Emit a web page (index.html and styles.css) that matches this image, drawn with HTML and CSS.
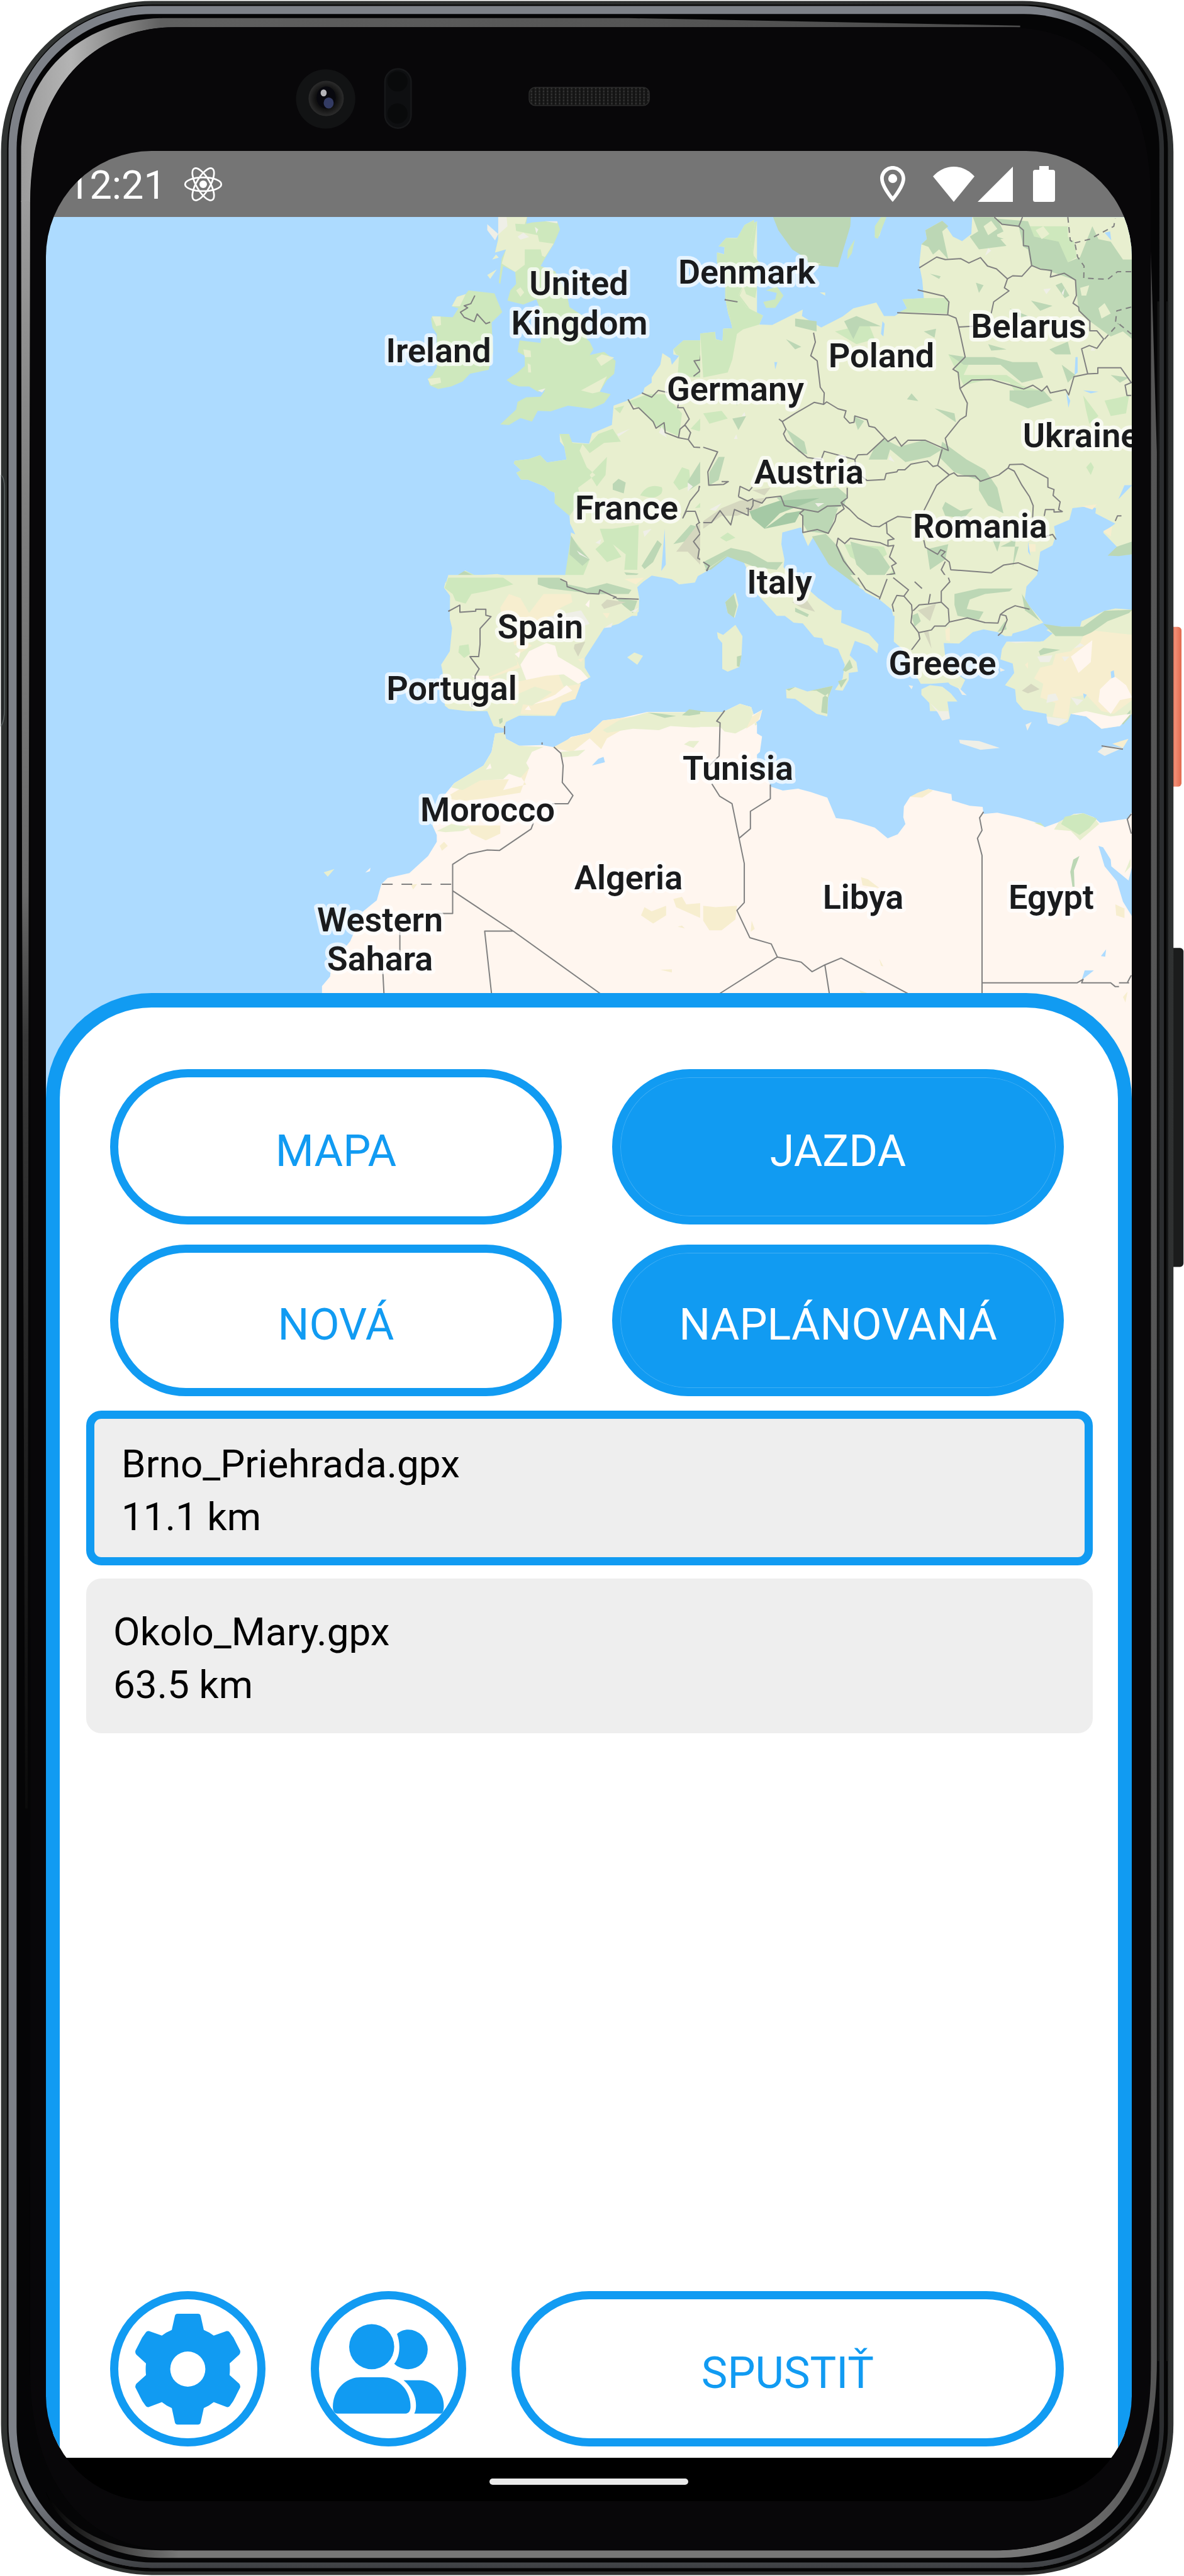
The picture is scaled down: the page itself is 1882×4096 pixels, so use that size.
FILE: index.html
```html
<!DOCTYPE html>
<html lang="sk">
<head>
<meta charset="utf-8">
<meta name="viewport" content="width=device-width, initial-scale=1">
<title>Jazda</title>
<link rel="stylesheet" href="styles.css">
</head>
<body>
<div class="device">
  <svg class="device-frame" viewBox="0 0 2356 5128" preserveAspectRatio="none" aria-hidden="true">
    <defs>
      <linearGradient id="rim" x1="0" x2="1" y1="0" y2="0">
        <stop offset="0" stop-color="#7d8188"/><stop offset=".9" stop-color="#7d8188"/><stop offset=".985" stop-color="#26282a"/><stop offset="1" stop-color="#2c2e30"/>
      </linearGradient>
      <linearGradient id="rimShade" x1="0" x2="0" y1="0" y2="1">
        <stop offset="0" stop-color="#000" stop-opacity="0"/><stop offset=".97" stop-color="#000" stop-opacity="0"/><stop offset="1" stop-color="#000" stop-opacity=".5"/>
      </linearGradient>
      <linearGradient id="edge" x1="0" x2="1" y1="0" y2="0">
        <stop offset="0" stop-color="#303332"/><stop offset=".985" stop-color="#2b2c2c"/><stop offset="1" stop-color="#303232"/>
      </linearGradient>
      <linearGradient id="topGlow" gradientUnits="userSpaceOnUse" x1="42" x2="2030" y1="0" y2="0">
        <stop offset="0" stop-color="#9c9c9c"/><stop offset=".05" stop-color="#b4b4b4"/><stop offset=".14" stop-color="#606060"/><stop offset="1" stop-color="#4c4c4c"/>
      </linearGradient>
      <linearGradient id="sideGlow" gradientUnits="userSpaceOnUse" x1="0" x2="0" y1="400" y2="3600">
        <stop offset="0" stop-color="#9c9c9c"/><stop offset=".2" stop-color="#7e7e7e"/><stop offset=".43" stop-color="#6a6a6a"/><stop offset=".52" stop-color="#383838"/><stop offset="1" stop-color="#0b0b0b"/>
      </linearGradient>
      <linearGradient id="bottomGlow" x1="0" x2="1" y1="0" y2="0">
        <stop offset="0" stop-color="#000"/><stop offset=".12" stop-color="#777"/><stop offset=".9" stop-color="#777"/><stop offset="1" stop-color="#555"/>
      </linearGradient>
      <linearGradient id="power" x1="0" x2="1" y1="0" y2="0">
        <stop offset="0" stop-color="#d9573d"/><stop offset=".5" stop-color="#f08d74"/><stop offset="1" stop-color="#e26a4e"/>
      </linearGradient>
      <radialGradient id="lens" cx=".5" cy=".5" r=".5">
        <stop offset="0" stop-color="#08080c"/><stop offset=".6" stop-color="#111"/><stop offset="1" stop-color="#2c2c2c"/>
      </radialGradient>
      <pattern id="mesh" width="8" height="6" patternUnits="userSpaceOnUse">
        <rect width="8" height="6" fill="#141414"/><rect width="3" height="4" fill="#343434"/>
      </pattern>
    </defs>
    <rect x="2326" y="1248" width="25" height="318" rx="7" fill="url(#power)"/>
    <rect x="2326" y="1887" width="29" height="635" rx="7" fill="#1b1c1c"/>
    <rect x="2" y="2" width="2333" height="5124" rx="300" fill="url(#edge)"/>
    <path d="M2 946Q9 950 9 975V1410Q9 1435 2 1446" fill="#26292a" stroke="#596060" stroke-width="2"/>
    <rect x="14" y="9" width="2310" height="5110" rx="290" fill="#050505"/>
    <rect x="17" y="12" width="2299" height="5100" rx="284" fill="url(#rim)"/>
    <rect x="17" y="12" width="2299" height="5100" rx="284" fill="url(#rimShade)"/>
    <rect x="33" y="28" width="2274" height="5073" rx="270" fill="#050506"/>
    <path d="M42 402V306C42 150 160 36 330 36H1250L2030 51V54H350C180 54 60 180 60 402Z" fill="url(#topGlow)"/>
    <path d="M42 400H60L57 1800L55 3600H50L44 1800Z" fill="url(#sideGlow)"/>
    <path d="M2290 500L2302 900V4700C2302 4950 2200 5092 1980 5092H320C220 5092 120 5040 90 4960C140 5040 220 5077 320 5077H1980C2190 5077 2290 4930 2290 4700Z" fill="url(#bottomGlow)"/>
    <path d="M2303 600H2307V4700H2303ZM2321 600H2324V4700H2321Z" fill="#151616"/>
    <path d="M61 400C61 180 180 54 350 54H2000C2190 54 2290 180 2290 400V4720C2290 4930 2190 5077 1980 5077H350C160 5077 60 4930 60 4720Z" fill="#080709"/>
    <circle cx="648" cy="197" r="59" fill="#121314"/>
    <circle cx="649" cy="196" r="35" fill="url(#lens)"/>
    <ellipse cx="649" cy="194" rx="19" ry="22" fill="#08080e"/>
    <ellipse cx="654" cy="205" rx="10" ry="11" fill="#333b63"/>
    <ellipse cx="644" cy="185" rx="6" ry="7" fill="#b5b5b9"/>
    <rect x="766" y="137" width="52" height="118" rx="26" fill="#0e0f11" stroke="#17181a" stroke-width="3"/>
    <circle cx="791" cy="162" r="20" fill="#090a0b"/>
    <circle cx="791" cy="226" r="20" fill="#090a0b"/>
    <rect x="1053" y="174" width="239" height="36" rx="12" fill="url(#mesh)" stroke="#2b2b2b" stroke-width="2"/>
  </svg>

  <main class="screen">
    <header class="status-bar">
      <span class="clock">12:21</span>
      <svg class="react-icon" viewBox="-38 -35 76 70" aria-hidden="true">
        <g fill="none" stroke="#fff" stroke-width="3.4">
          <ellipse rx="36" ry="13.6"/><ellipse rx="36" ry="13.6" transform="rotate(60)"/><ellipse rx="36" ry="13.6" transform="rotate(120)"/>
        </g>
        <circle r="7.5" fill="#fff"/>
      </svg>
      <span class="status-icons">
        <svg class="pin-icon" viewBox="5 2 14 20" aria-hidden="true"><path fill="#fff" d="M12 2C8.100 2 5 5.100 5 9c0 5.200 7 13 7 13s7-7.800 7-13c0-3.900-3.100-7-7-7zM7 9c0-2.800 2.200-5 5-5s5 2.200 5 5c0 2.900-2.900 7.200-5 9.900C9.900 16.200 7 11.900 7 9z"/><circle cx="12" cy="9" r="2.500" fill="#fff"/></svg>
        <svg class="wifi-icon" viewBox="0 0 66 56" aria-hidden="true"><path fill="#fff" d="M0 15.500C9 5.500 21 0 33 0S57 5.500 66 15.500L33 56Z"/></svg>
        <svg class="signal-icon" viewBox="0 0 56 56" aria-hidden="true"><path fill="#fff" d="M0 56H56V0Z"/></svg>
        <svg class="battery-icon" viewBox="0 0 35 57" aria-hidden="true"><path fill="#fff" d="M10 6V0H25V6H31.500Q35 6 35 9.500V53.500Q35 57 31.500 57H3.500Q0 57 0 53.500V9.500Q0 6 3.500 6Z"/></svg>
      </span>
    </header>

    <svg class="map" viewBox="0 0 1726 1406" role="img" aria-label="Mapa">
      <rect width="1726" height="1406" fill="#addbff"/>

      <!-- British Isles and western Europe -->
      <g class="tile" transform="translate(405.8 -9.6) scale(.4585 .4075)">
        <path class="forest" d="M440 655L455 640 470 610 470 480 455 455 450 420 455 410 525 415 545 380 522 372 540 335 570 325 580 310 670 322 680 350 697 395 660 435 665 550 650 620 585 635 560 665 520 685 475 695 445 680Z"/>
        <path class="land" d="M522 372L540 335 570 325 550 372ZM453 412L483 412 485 445 468 450ZM438 655L482 650 485 670 450 680Z"/>
        <path class="forest" d="M683 24H783L780 50 800 45 850 40 888 42 897 72 875 130 845 185 830 215 880 235 920 320 930 375 985 415 990 500 1000 510 1013 540 1000 562 1050 550 1090 585 1085 635 1060 660 1035 705 1073 715 1050 750 1005 772 925 760 865 782 820 780 800 822 760 808 720 835 690 833 745 775 750 745 780 727 830 725 845 700 820 705 790 685 755 685 730 675 712 660 750 630 775 605 775 565 750 550 757 505 830 515 835 400 815 345 770 365 715 350 725 310 745 285 742 238 700 215 690 285 685 280 695 185 710 150 672 162 683 110Z"/>
        <path class="land" d="M683 24H783L775 52 742 50 745 78 820 95 825 120 875 128 845 180 835 175 830 150 775 150 775 210 742 238 695 205 710 150 672 162 683 110ZM745 310L760 298 773 318 760 335ZM770 540L795 545 797 570 775 570ZM785 595L795 600 797 630 787 630ZM1022 575L1042 560 1085 572 1040 605ZM970 700L1060 645 1035 705 1010 712ZM645 250L678 228 655 265ZM662 190L675 170 685 182Z"/>
        <path class="pale" d="M683 24H712L715 60 683 92ZM645 52L683 90 672 115 645 75ZM750 100L770 85 790 102 760 112ZM810 62L822 72 815 88Z"/>
        <path class="land" d="M1580 40L1535 70 1515 105 1480 105 1450 138 1475 140 1470 170 1445 162 1443 200 1470 280 1470 340 1480 400 1497 458 1465 460 1463 508 1437 500 1435 472 1390 482 1383 505 1325 505 1290 540 1290 560 1310 565 1285 600 1280 575 1252 555 1245 600 1215 650 1215 670 1190 690 1185 710 1135 738 1083 760 1077 835 1008 868 998 908 935 902 928 870 896 870 897 900 912 920 920 970 852 982 828 953 790 968 740 975 737 985 762 1012 746 1022 762 1048 785 1048 845 1075 862 1092 878 1095 880 1138 930 1187 932 1220 950 1262 935 1255 930 1360 915 1428 880 1440 815 1428 770 1438 680 1417 600 1422 568 1403 550 1425 500 1448 495 1470 516 1500 516 1580 1165 1580 1170 1510 1163 1465 1215 1423 1285 1437 1310 1457 1365 1450 1375 1425 1415 1400 1475 1347 1530 1365 1580 1390Z"/>
        <path class="forest" d="M1580 40L1535 70 1515 105 1480 108 1455 135 1475 145 1470 170 1445 165 1443 200 1470 280 1470 340 1480 400 1497 458 1465 460 1463 508 1437 500 1435 472 1390 482 1383 505 1325 505 1290 540 1300 560 1310 565 1305 640 1360 650 1480 645 1500 580 1535 560 1530 500 1580 540 1580 420 1520 330 1560 230ZM896 870L928 870 940 905 998 910 1030 870 1080 850 1108 900 1050 905 1000 945 975 910 965 935 990 1000 1020 1030 960 1080 965 1105 1000 1130 950 1160 930 1190 878 1140 880 1100 862 1092 845 1075 785 1048 762 1048 746 1022 762 1012 737 985 740 975 790 968 828 953 852 982 920 970 912 920ZM1060 960L1000 1030 1025 1075 1055 1030ZM1080 1240L1170 1225 1165 1400 1120 1400 1125 1340 1080 1300 1110 1350 1060 1370 1020 1320 1050 1290 1035 1240ZM1010 1190L1080 1170 1050 1130 1000 1130ZM1175 1110Q1200 1060 1250 1078 1260 1110 1215 1120ZM1290 1060L1320 1000 1345 1010 1350 1070 1310 1090ZM935 1270L1000 1360 975 1430 915 1420ZM1130 745L1200 715 1260 715 1320 790 1310 880 1260 855 1230 840 1170 770ZM1085 770L1120 760 1105 790ZM1350 850L1400 790 1420 800 1380 860ZM500 1450L570 1405 610 1425 640 1440 740 1460 690 1500 600 1490 570 1530 540 1520 530 1480ZM1400 1120L1480 1120 1440 1150 1365 1160ZM1440 1275L1475 1258 1500 1275 1470 1290Z"/>
        <path class="wood" d="M1080 1065L1100 1045 1125 1060 1118 1102 1080 1088ZM1340 1055L1430 895 1435 920 1395 1010 1385 1060 1345 1090ZM1445 958L1470 955 1450 1050 1420 1058ZM1180 1385L1235 1285 1250 1300 1220 1370 1190 1398ZM935 1265L960 1310 1000 1360 975 1385 930 1340ZM820 1435L900 1445 960 1470 1040 1480 1150 1500 1140 1530 1040 1500 930 1495 850 1470ZM1120 1410L1170 1415 1140 1440ZM1495 800L1545 790 1510 860ZM1530 560L1550 538 1568 560 1568 585ZM1400 1400L1475 1320 1530 1330 1580 1350 1580 1385 1480 1347 1420 1400ZM1290 1300L1350 1225 1370 1230 1330 1290ZM1380 1170L1580 1180 1580 1250 1480 1230 1430 1210ZM500 1450L565 1405 600 1425 570 1445Z"/>
        <path class="stone" d="M1300 1330L1370 1230 1430 1185 1450 1195 1440 1230 1385 1275 1380 1350 1415 1380 1400 1400 1340 1330Z"/>
        <path class="pale" d="M1185 1250L1215 1240 1190 1272ZM1340 1060L1358 1075 1340 1095ZM1250 840L1268 885 1240 865ZM1485 870L1492 890 1475 888ZM1020 1295L1040 1280 1035 1300ZM1140 850L1100 880 1095 870ZM845 40H888V48ZM955 1325L1000 1360 965 1340ZM1425 1160L1450 1150 1430 1175ZM820 700L847 692 835 708Z"/>
        <path class="sand" d="M700 1568L720 1490 770 1500 810 1540 830 1490 900 1500 935 1490 940 1530 900 1550 960 1568ZM1125 1440L1180 1430 1165 1455 1130 1455Z"/>
        <path class="water" d="M1260 1240L1264 1380 1248 1405ZM1470 762L1472 780 1450 798Z"/>
        <path class="border" d="M602 330L588 362 565 370 577 378 552 395 565 415 600 432 610 402 640 440 655 434M1181 710L1215 727 1238 700 1270 708M1390 520L1383 582 1362 585 1383 625 1360 645M1133 735L1152 773 1170 768 1220 822 1230 848 1258 826 1262 865 1308 885 1342 892 1362 922 1400 924 1444 940 1410 1018 1412 1070 1465 1067 1480 1055 1455 1058M1308 885L1313 852 1330 835 1345 812 1325 768 1305 768 1308 750M1330 835L1350 865 1342 892M1412 1070L1395 1082 1380 1075 1378 1090 1348 1132 1323 1198 1335 1172 1366 1172 1380 1216 1370 1225 1383 1260 1360 1290 1380 1320 1375 1355 1415 1378 1407 1405M1380 1216H1427L1455 1170 1490 1225 1502 1165 1550 1188 1548 1155 1568 1158M1568 1065L1550 1092 1530 1068 1515 1110 1550 1132 1568 1120M898 1437L920 1448 922 1465 992 1493 1032 1495 1035 1480 1075 1497 1092 1505 1080 1510M1092 1510L1170 1515M1468 346L1510 355M510 1562L550 1538 550 1562 605 1562 605 1553 640 1553V1568"/>
      </g>

      <!-- Central and eastern Europe -->
      <g class="tile" transform="translate(1044.8 -9.6) scale(.487 .4075)">
        <path class="land" d="M-10 478L38 472 40 500 63 508 65 460 95 458 75 350 75 290 45 200 45 162 68 170 70 140 50 138 75 105 110 108 135 55 165 36 168 60 155 110 165 175 185 205 150 240 140 280 115 330 140 375 195 408 183 443 225 445 300 400 325 385 322 410 385 455 455 412 490 380 565 357 590 410 625 410 665 380 650 345 720 340 715 270 705 210 712 130 730 110 725 75 780 38 815 100 845 118 875 90 878 24 1400 24 1400 1340 1355 1345 1350 1310 1305 1255 1345 1220 1280 1180 1282 1160 1260 1152 1205 1160 1195 1205 1145 1230 1150 1270 1140 1305 1100 1330 1090 1420 1055 1465 1050 1510 1065 1580H620L615 1555 575 1515 510 1470 505 1455 440 1400 410 1380 390 1330 380 1290 360 1270 342 1308 322 1255 320 1235 258 1255 255 1300 265 1360 262 1390 345 1500 390 1550 450 1580H240L180 1500 160 1440 130 1365 75 1347 20 1395 -10 1400Z"/>
        <path class="forest" d="M-10 478L38 472 40 500 63 508 65 460 95 458 75 350 75 290 45 200 45 162 68 170 70 140 50 138 75 105 110 108 135 55 165 36 168 60 155 110 165 175 185 205 150 240 115 330 140 375 195 408 183 443 130 462 110 480 95 580 80 630 0 650ZM650 345L720 340 800 340 800 400 640 395 665 380ZM1050 60L1200 60 1220 180 1190 200 1160 170 1080 150ZM1240 350L1320 340 1290 400ZM1250 780L1240 720 1290 800 1260 830ZM1000 670L1100 700 1040 750ZM800 560L870 590 850 640 990 640 1040 680 940 655 850 680ZM430 470L540 440 560 500 500 520ZM1250 1000L1265 980 1275 1000 1265 1030ZM460 1300L590 1310 600 1340 540 1390 480 1350ZM55 1275L80 1255 105 1275 75 1290ZM560 1480L620 1400 640 1440 590 1520ZM1310 740L1390 720 1380 790 1330 800ZM0 790L60 780 80 810 20 830ZM1370 190H1400V315H1370Z"/>
        <path class="wood" d="M228 24H482L480 60 440 220 350 210 330 180 290 150 245 75ZM880 24H950L975 55 1030 60 1045 140 1060 150 1070 213 1130 235 1215 270 1225 390 1250 420 1330 490 1370 470 1400 500V190H1370L1330 120 1290 110 1270 60 1230 180 1190 200 1160 120 1080 100 1060 40 960 30 980 80 910 120ZM712 130L730 110 725 75 780 38 800 60 780 80 800 190 770 150 750 170 735 140ZM870 100L950 40 960 100 1030 130 900 150ZM800 560L860 570 950 570 1010 590 1090 590 1110 650 1040 670 970 600 850 600ZM1000 700L1110 700 1140 740 1060 770 1000 740ZM780 900L860 970 920 1010 960 1080 980 1180 930 1150 900 1090 900 1050 820 1020 770 960ZM560 920L590 890 640 920 720 895 780 930 740 960 660 980 610 930 600 970 540 970ZM240 1120L310 1090 440 1080 470 1110 460 1150 380 1175 270 1150ZM320 1165L440 1160 410 1260 340 1250 325 1220ZM480 1290L570 1320 610 1390 570 1460 500 1380ZM355 1270L400 1260 440 1310 480 1400 560 1490 500 1460 410 1380ZM0 1370L90 1315 150 1330 210 1370 260 1370 240 1400 170 1390 75 1347 10 1400ZM20 1020L50 960 70 960 50 1050 20 1070ZM820 1480L960 1460 1040 1480 1040 1510 900 1550 820 1568ZM730 1320L800 1300 790 1360 740 1400ZM460 430L500 410 580 450 510 450 490 500ZM720 470L760 460 755 495ZM665 735L680 712 702 742ZM1010 1390L1030 1310 970 1310 1020 1280ZM780 1160L790 1135 840 1170 880 1160 850 1200 790 1190ZM300 420L370 430 370 470 300 450ZM270 500L320 530 300 540ZM270 850L310 940 340 950 330 900ZM490 800L525 820 505 855ZM755 770L820 790 825 825ZM1320 1345L1350 1310 1400 1290V1340L1355 1347ZM940 1270L975 1265 960 1330Z"/>
        <path class="land" d="M1085 75L1110 60 1130 90 1105 110ZM1230 300L1260 290 1250 330 1235 330ZM1290 380L1310 360 1330 400 1300 420ZM870 480L910 500 880 530ZM1010 225L1060 290 1020 300Z"/>
        <path class="wood" d="M890 280L915 290 900 320ZM740 245L775 255 770 265ZM1070 350L1140 370 1100 390ZM930 520L990 540 940 545ZM1130 540L1190 510 1200 560 1150 560ZM1170 600L1215 640 1190 670ZM1150 290L1180 340 1195 330 1170 280ZM1330 640L1390 650 1360 670ZM95 690L110 760 120 700ZM95 810L140 800 115 855ZM1000 380L1060 410 1030 415Z"/>
        <path class="deep" d="M150 1170L250 1130 380 1120 250 1180 200 1240 160 1200ZM270 1180L320 1170 300 1215 200 1240Z"/>
        <path class="stone" d="M0 1210L60 1160 120 1130 200 1120 180 1160 110 1190 60 1190 0 1240ZM160 1090L220 1080 200 1110ZM590 1440L620 1420 600 1480 580 1500Z"/>
        <path class="land" d="M1190 60L1215 60 1230 80 1205 118 1190 100ZM915 60L940 38 960 70 930 95ZM340 200L385 205 350 220ZM970 110L1020 105 1050 150 1000 150ZM120 290Q150 270 175 300 L172 340 145 325ZM380 318L398 318 398 330ZM930 190L990 180 1000 240 960 225ZM570 50L585 60 575 98 560 98Z"/>
        <path class="forest" d="M196 355L235 345 240 320 205 310 240 295 262 330 235 378 205 378ZM470 190L472 155 495 110 485 165ZM560 60L580 24H598L570 108 560 104ZM130 290L175 300 170 340 140 325Z"/>
        <path class="pale" d="M610 955L625 980 605 970ZM1110 305L1135 302 1120 325ZM670 1440L690 1430 680 1465ZM365 1140L395 1140 375 1155ZM930 145L940 155 920 175ZM840 125L855 140 845 130ZM20 1165L60 1140 40 1170ZM150 850L200 860ZM1270 530L1280 545 1265 545ZM135 785L138 800 125 800ZM1170 320L1180 300 1175 330ZM100 890L108 872 112 890Z"/>
        <path class="sand" d="M1062 1300H1085V1330H1062ZM1235 1152L1285 1145 1270 1165ZM1305 1250L1335 1230 1330 1270Z"/>
        <path class="water" d="M585 430L592 440 588 490 580 480ZM1215 570L1222 570 1222 630 1212 640ZM1185 710L1198 740 1192 768ZM1375 1070H1400L1355 1125ZM1240 700L1290 705 1265 712ZM232 590H242L235 618ZM1310 85L1328 80 1332 115ZM1060 1290L1068 1345 1060 1330ZM260 1255L320 1235 325 1260 340 1305 300 1300Z"/>
        <path class="border" d="M705 222L762 180 790 190 840 186 867 203 905 182 928 215 957 226 993 265 1010 253 1040 255 1072 213 1062 138 1045 135V75L1030 60 975 52 950 24M1030 60L1042 24M1072 213L1100 227 1137 232 1133 258 1178 243 1215 270 1218 330 1207 360 1225 375 1227 390 1262 430V468H1285L1307 500 1285 536 1260 525 1235 538 1255 636 1210 647 1193 718 1183 697 1133 710 1122 683 1105 703 1076 680 1046 695 940 658 876 660 838 693 832 630 815 618 855 570 833 450 825 418 800 406 633 397M700 308L785 332 802 355 798 404M833 453L880 450M993 265L983 300 998 312 948 355 940 400M838 693L862 750 858 800 838 815 790 887 800 935 725 895H668L647 918 627 882 603 900 560 845 541 840 535 815 495 800 492 825 478 828 460 805 466 780 440 772 403 745 393 755 395 710 382 688 372 585 351 565 366 512 360 475M393 755L362 747 300 790 258 822 247 812M258 822L270 852 262 870 272 895 340 962 385 970 395 938 495 970 505 952 535 950 592 887M495 970L500 1020 535 1052 592 1048 597 1025 632 1018 636 1010 658 1010 678 988 732 976 750 997 765 993 780 930M765 993L803 1030 762 1070 720 1170M803 1030L818 1022 830 1034H888L905 1055 965 1030 995 1003 1015 1015 1040 1070 1065 1115 1077 1150 1075 1200M995 1003L1000 990 1043 988 1125 1043V1078L1145 1087 1142 1110 1165 1135 1160 1165 1172 1173 1145 1175V1165H1117L1113 1190M1255 636L1288 634V612H1363L1397 670 1377 680 1383 720H1397M470 1080V1120L450 1138 478 1165 505 1198 550 1230 575 1232 598 1215 635 1192 680 1197M450 1150L405 1152 375 1175 265 1150 253 1113 205 1120 192 1140 163 1128 162 1150 155 1165 140 1160M450 1138L460 1162 435 1185 430 1210 408 1258 372 1243 325 1255 325 1190 315 1180 330 1165M115 1115L120 1075 150 1092 160 1078M115 1115L145 1132 163 1122M0 1216H27L55 1170 90 1225 102 1165 147 1188V1158M598 1215L600 1258 623 1280 603 1285V1308L578 1295 480 1277 462 1298 440 1277 435 1305 458 1365 530 1475 575 1505 590 1445 600 1420 625 1415 615 1385 630 1375 608 1350 622 1305 603 1308M575 1505L578 1515M615 1425L670 1475 655 1500 680 1530 690 1568M670 1475L683 1470M720 1285L725 1312 765 1340 775 1322 790 1330 777 1345 803 1370 808 1400 940 1412 980 1382 1028 1373 1093 1405M790 1368L777 1400 805 1450 777 1480 777 1525 735 1530 690 1545 682 1568M777 1525L800 1550 803 1568M735 1530L741 1495M655 1500L632 1500 617 1535 622 1562M983 1568L990 1555 1018 1545 1065 1553M690 1447L714 1472M1117 1270L1140 1262 1152 1282M1345 1210L1352 1190H1365M0 922L47 940 15 1018 18 1070 67 1067 82 1056H60M70 346L112 355M0 1370L20 1385 10 1405"/>
        <path class="border dashed" d="M1190 24L1198 115 1213 125 1222 180 1243 215 1242 262 1320 267 1352 237H1397M1213 125L1262 110 1340 60 1345 30M1397 375L1350 390 1346 430 1397 480M1310 500L1355 440"/>
      </g>

      <!-- Iberia and the Maghreb -->
      <g class="tile" transform="translate(405.8 573.5) scale(.4585 .433)">
        <path class="land" d="M510 -10L497 38 517 68 515 150 523 185 515 270 485 320 490 345 498 470 512 482 575 490 645 490 667 545 702 553 710 530 755 507 880 508 905 460 950 445 970 382 1003 365 983 330 983 295 1050 185 1100 170 1170 125 1172 75 1165 35 1210 -10Z"/>
        <path class="forest" d="M510 0L497 38 525 60 535 85 570 95 590 60 640 50 735 25 700 0ZM548 250L580 245 585 280 565 295 545 275Z"/>
        <path class="wood" d="M820 0H895L925 25 990 40 1060 20 1145 45 1135 60 1040 60 980 55 860 40 820 25ZM1090 75L1165 85 1150 130 1120 105ZM825 125L862 100 850 120ZM685 520L698 515 698 530 688 538Z"/>
        <path class="stone" d="M1040 100L1060 80 1125 90 1080 105 1050 115ZM948 245L985 235 960 290 945 260Z"/>
        <path class="sand" d="M690 110L720 60 760 75 790 130 840 60 935 60 940 90 900 110 860 160 700 160ZM730 200L800 250 740 290 760 330 650 370 760 380 890 350 910 400 970 390 950 445 900 460 880 505 760 500 770 460 660 440 640 370 750 320ZM1120 5L1190 0 1160 25ZM1045 130L1070 130 1060 150ZM960 300L980 295 970 310Z"/>
        <path class="land" d="M745 430L810 400 870 420 800 470 740 460ZM660 240L760 250 740 300 680 290Z"/>
        <path class="desert" d="M760 320L790 270 850 240 880 250 890 290 970 340 995 370 960 390 910 355 850 360 780 375ZM805 465L880 430 920 395 940 415 870 450ZM775 485L788 470 797 487ZM590 360L650 360 655 400ZM985 100L1000 80 998 110ZM740 280L760 270 755 295Z"/>
        <path class="pale" d="M850 145L970 120 1000 170 940 190 870 180ZM1140 125L1170 110 1160 125ZM1050 185L1080 165 1075 182Z"/>
        <path class="desert" d="M672 572L705 568 710 592 755 617 835 615 890 625 935 585 1000 570 1045 525 1110 515 1200 493 1465 493 1520 465 1560 475 1580 540V1750H72V1500L100 1465 105 1420 170 1335 215 1225 262 1185 278 1125 300 1103 375 1085 440 1022 470 970 470 945 455 910 495 800 530 755 632 690 660 640Z"/>
        <path class="sand" d="M870 625L940 585 1000 570 1045 525 1150 510 1110 560 1060 590 1040 630 1000 590 940 640ZM495 810L600 745 720 740 700 780 780 760 740 700 790 700 760 790 640 810 560 820ZM575 910H690L690 940 640 965 590 940ZM1178 1240L1190 1210 1215 1225 1265 1205 1265 1240 1220 1270ZM1290 1180L1320 1172 1335 1200 1385 1195 1510 1205 1505 1255 1455 1295 1410 1295 1395 1255 1300 1210ZM1305 1282L1320 1278 1330 1288ZM1245 1440L1285 1438 1285 1450ZM480 985L495 970 508 985 488 1003ZM380 1128L402 1125 388 1145ZM720 455L750 445 740 470Z"/>
        <path class="land" d="M672 572L705 568 710 592 755 617 840 622 800 640 780 680 790 700 760 735 720 720 700 740 620 745 560 780 520 770 530 755 632 690 660 640ZM1060 570L1045 560 1100 525 1200 495 1465 493 1520 465 1560 475 1580 540 1510 572 1460 545 1360 550 1280 545 1240 560 1150 555ZM900 640L985 632 960 655 905 660ZM1327 612L1345 600 1380 600 1360 625ZM470 930L520 905 590 915 560 930 500 935Z"/>
        <path class="wood" d="M1200 495L1250 500 1300 508 1260 515ZM1320 505L1345 483 1420 495 1345 507Z"/>
        <path class="desert" d="M640 705L655 682 660 700Z"/>
        <path class="land" d="M1130 293L1155 275 1185 287 1165 320ZM78 1082L115 1070 92 1098Z"/>
        <path class="desert" d="M222 1083L240 1065 238 1078Z"/>
        <path class="water" d="M1008 690L1030 665 1048 658 1053 678Z"/>
        <path class="border" d="M898 5L920 16 922 33 992 58 1032 60 1035 45 1075 65 1092 72 1080 76M1092 76L1170 79M510 124L550 101V127L605 123V116H640V138L658 143 620 187V245L615 290H585L617 335 603 360V400M590 445L592 475M876 622L900 645 908 690 905 752 942 800 925 830H870M805 900L797 923 687 1002 645 1000 580 1015 525 1053V1233H470M525 1150L735 1298 1040 1530M735 1298H636L660 1530M342 1300V1375M283 1450L287 1530M1468 488L1442 527 1453 533 1450 655 1418 690M1427 757L1452 803 1493 830 1516 957 1536 1050V1193L1510 1222 1555 1322 1568 1326M1516 957L1555 922V858L1568 850M1568 1447L1450 1530M705 545V575M835 605V613"/>
        <path class="border western" d="M280 1126H525"/>
      </g>

      <!-- Eastern Mediterranean -->
      <g class="tile" transform="translate(1044.8 573.5) scale(.487 .433)">
        <path class="land" d="M180 -10L215 95 295 165 325 168 362 218 388 222 395 245 440 262 462 320 455 370 430 412 455 415 475 375 475 350 505 345 500 310 478 285 495 232 540 250 568 278 572 245 540 205 450 165 452 120 430 118 375 75 340 40 310 -10ZM270 410L300 402 340 418 423 397 408 440 405 510 370 500 300 445 272 443ZM45 200L65 210 105 173 128 215 125 285 118 328 80 345 62 335 62 240 48 222ZM72 90L105 55 115 100 103 147 80 130ZM480 -10L530 55 575 80 625 125 622 235 650 262 685 340 710 390 800 390 840 410 855 375 810 340 790 290 785 240 835 242 880 200 915 190 960 200 985 215 1030 215 1065 185 1110 165 1065 105 1040 60 1055 20 1060 -10ZM712 410L740 395 780 400 808 425 830 455 797 455 805 515 780 522 765 490 740 490 738 460 712 430ZM1400 118L1345 113 1310 122 1235 160 1230 180 1150 180 1120 192 1140 205 1100 235 990 235 975 262 970 300 1010 315 1015 350 985 395 1018 410 1022 455 1045 485 1120 500 1125 532 1160 545 1190 530 1200 500 1250 510 1300 555 1360 545 1400 500Z"/>
        <path class="wood" d="M270 410L300 402 280 415ZM408 440L423 397 350 415 370 415ZM455 340L478 300 488 330 465 345ZM440 380L470 370 450 405ZM820 60L900 40 1010 40 1000 50 920 60 870 80 860 115 915 125 900 155 830 140 820 100ZM1110 170L1170 180 1240 180 1310 122 1400 118 1390 130 1320 160 1250 215 1150 215ZM680 140L700 130 710 160 690 180ZM300 110L345 135 340 145 300 125ZM72 90L100 60 110 105 100 147 80 130ZM110 290L125 285 118 328 110 325ZM960 200L985 160 990 190ZM1040 60L1065 105 1100 160 1050 120ZM1095 270L1110 258 1165 265 1100 285ZM390 440L408 425 405 500 385 495ZM1360 530L1395 485V510L1370 540Z"/>
        <path class="stone" d="M290 90L330 70 365 125 320 110ZM700 120L760 95 740 160ZM720 200L735 195 745 260ZM1040 415L1070 390 1098 410 1060 425ZM1170 460L1195 440 1188 500 1165 495Z"/>
        <path class="sand" d="M1240 215L1280 195 1400 210V450L1340 500 1300 490 1250 430 1200 440 1190 520 1140 510 1150 460 1100 440 1110 390 1080 370 1100 330 1140 320 1150 280 1200 270 1230 240ZM790 190L805 180 805 235 793 230ZM1050 320L1060 310 1060 335Z"/>
        <path class="desert" d="M1200 290L1270 230 1265 310 1225 350ZM1295 410L1340 360 1380 395 1400 440 1360 450 1330 500 1290 455ZM1200 500L1250 490 1330 510 1395 500 1360 545 1300 555 1250 510Z"/>
        <path class="pale" d="M990 235H1090L1020 240ZM968 330L985 340 970 345ZM1090 290L1140 285 1130 310 1100 310ZM1170 290L1195 290 1180 308ZM1125 430L1150 425 1160 450 1120 460ZM1200 440L1240 450 1220 470ZM1245 250L1230 240 1210 260ZM835 595L900 600 968 625 905 632 838 608ZM1052 540L1072 530 1058 562ZM1287 640L1310 618 1370 625 1310 655ZM670 395L685 398 680 410ZM740 460L765 495 780 525 805 518 800 490 770 490ZM1120 510L1190 520 1160 545 1125 535ZM830 400L860 432 845 430Z"/>
        <path class="sand" d="M1335 610L1388 592 1370 625Z"/>
        <path class="water" d="M1000 235L1010 205 1075 185 1120 200 1140 205 1110 233ZM1330 345L1340 340 1343 365 1332 370ZM1240 425L1252 430 1243 445ZM745 390L800 385 815 405 770 398Z"/>
        <path class="desert" d="M-10 493H65L120 463 155 475 160 505 193 485 185 520 168 535 172 570 192 583 185 640 160 665 205 730 222 768 260 782 310 775 350 787 405 808 433 883 480 890 560 918 602 957 635 942 660 905 653 880 655 840 675 805 735 776 810 795 812 818 870 838 912 842 915 868 960 863 1030 880 1090 900 1115 916 1160 898 1210 868 1240 865 1275 880 1295 900 1345 892 1385 885 1400 860V1940H-10Z"/>
        <path class="land" d="M-10 493H65L120 463 155 475 160 505 160 540 105 572 70 565 55 548H-10ZM1145 925L1160 898 1210 868 1275 880 1292 905 1230 965 1200 930ZM1375 1085L1395 1030V1060Z"/>
        <path class="sand" d="M160 510L193 485 180 525 140 555ZM675 805L700 790 735 776 750 782 715 808ZM0 1205L40 1210 110 1205 105 1255 60 1295 20 1295 0 1260ZM515 1100L538 1108 575 1140 520 1130ZM158 1260L168 1290 155 1300ZM510 1515L535 1525 515 1530ZM1345 1200L1375 1215 1375 1250 1348 1240ZM168 1335L183 1358ZM575 1400L588 1428 580 1425ZM1370 1540L1385 1520 1378 1560Z"/>
        <path class="forest" d="M1168 905L1180 878 1240 865 1285 885 1260 920 1228 945ZM1080 900L1100 900 1115 915Z"/>
        <path class="wood" d="M1228 1022L1208 1035 1198 1080 1205 1135 1212 1135 1210 1075Z"/>
        <path class="water" d="M1290 985L1305 990 1330 1035 1332 1060 1388 1112 1400 1060V1245L1370 1190 1350 1115 1310 1060ZM1298 1390L1315 1365 1312 1392ZM1245 1442H1275L1235 1478ZM1360 1860L1378 1870 1382 1905 1398 1930 1385 1930 1370 1900Z"/>
        <path class="border" d="M70 488L44 527 55 533 52 655 20 690M28 757L54 803 94 830 117 957 134 1050V1193L110 1222 152 1322 222 1345 242 1393 320 1412 355 1447 397 1422 450 1397 672 1530M242 1393L50 1530M397 1422L412 1530M117 957L154 922V858L219 812V760M915 860L902 882 910 928 895 957 910 1020V1530M910 1488H1220L1240 1475 1235 1488H1330L1345 1502H1357M1357 1488H1390M1384 1488L1397 1460M1397 868L1384 887 1397 940M505 0L530 43 575 72M575 80L600 5M620 0L670 45 655 68 680 100 682 125 678 165 703 202 745 192 755 178 790 178 803 163 800 115 777 90 735 97 705 100 685 122M777 90V50L805 15 800 0M803 163L862 148 920 165 962 167 970 135 988 140 992 155 975 200 962 213M970 135L990 118 1018 103 1065 116M703 202L707 225 680 265M655 68L632 65 617 100 622 125M735 97L741 60M690 15L714 40M1300 618L1370 630"/>
      </g>

      <g class="place-names">
        <text x="847" y="124">United</text>
        <text x="848" y="187">Kingdom</text>
        <text x="624" y="231">Ireland</text>
        <text x="923" y="481">France</text>
        <text x="1114" y="106">Denmark</text>
        <text x="1096" y="292">Germany</text>
        <text x="1328" y="239">Poland</text>
        <text x="1562" y="192">Belarus</text>
        <text x="1645" y="366">Ukraine</text>
        <text x="1213" y="424">Austria</text>
        <text x="1485" y="510">Romania</text>
        <text x="1166" y="599">Italy</text>
        <text x="786" y="670">Spain</text>
        <text x="645" y="768">Portugal</text>
        <text x="702" y="961">Morocco</text>
        <text x="926" y="1069">Algeria</text>
        <text x="531" y="1136">Western</text>
        <text x="531" y="1198">Sahara</text>
        <text x="1425" y="728">Greece</text>
        <text x="1100" y="895">Tunisia</text>
        <text x="1299" y="1100">Libya</text>
        <text x="1598" y="1100">Egypt</text>
      </g>
    </svg>

    <section class="sheet">
      <div class="choices">
        <button class="pill" type="button">MAPA</button>
        <button class="pill pill-active" type="button">JAZDA</button>
        <button class="pill" type="button">NOVÁ</button>
        <button class="pill pill-active" type="button">NAPLÁNOVANÁ</button>
      </div>
      <ul class="routes">
        <li><button class="route route-selected" type="button"><span>Brno_Priehrada.gpx</span><span>11.1 km</span></button></li>
        <li><button class="route" type="button"><span>Okolo_Mary.gpx</span><span>63.5 km</span></button></li>
      </ul>
      <div class="actions">
        <button class="round" type="button" aria-label="Nastavenia">
          <svg viewBox="0 0 100 100" aria-hidden="true"><path fill="currentColor" fill-rule="evenodd" d="M43.500 14.600H56.500Q58 14.600 58.300 16L60.300 25Q63.700 26.400 66.700 28.600L75 25.700Q76.300 25.500 77 26.600Q79.500 29.500 81.200 33.500L83.700 38.400Q84 40 83.100 40.900L76.900 46.600Q77.300 50.300 76.900 54L83.100 59.600Q84 60.800 83.700 62L81.200 67Q79.500 71 77 74Q76.300 74.900 75 74.600L66.700 71.500Q63.700 74 60.300 75.300L58.300 84.500Q58 85.900 56.500 85.900H43.500Q42 85.900 41.700 84.500L39.700 75.300Q36.300 74 33.300 71.500L25 74.600Q23.700 74.900 23 74Q20.500 71 18.800 67L16.300 62Q16 60.800 16.900 59.600L23.100 54Q22.700 50.300 23.100 46.600L16.900 40.900Q16 40 16.300 38.400L18.800 33.500Q20.500 29.500 23 26.600Q23.700 25.500 25 25.700L33.300 28.600Q36.300 26.400 39.700 25L41.700 16Q42 14.600 43.500 14.600ZM50 38.900A11.300 11.300 0 1 0 50 61.500A11.300 11.300 0 1 0 50 38.900Z"/></svg>
        </button>
        <button class="round" type="button" aria-label="Skupina">
          <svg viewBox="0 0 100 100" aria-hidden="true"><g fill="currentColor"><circle cx="39.200" cy="35.800" r="14.500"/><path d="M55.500 27.600C57.300 25.800 60 24.800 62.700 24.800A12.500 12.700 0 0 1 62.700 50.300C59.300 50.300 56 49 53.700 46.800C56.200 43.600 57 39.800 57 36C57 33 56.400 30 55.500 27.600Z"/><path d="M32 55.500H46.500C56.500 55.500 64.200 64 64.200 74.500C64.200 77 63 78.800 61 78.800H17C15.200 78.800 14.200 77.200 14.200 74.500C14.200 64 22 55.500 32 55.500Z"/><path d="M59.700 57.400H70C78.700 57.400 85.600 65 85.600 74C85.600 76.600 85 78.800 83.800 78.800H66.600C67.400 77.400 67.700 76 67.700 73.500C67.700 67.400 64.500 61.400 59.700 57.400Z"/></g></svg>
        </button>
        <button class="pill start" type="button">SPUSTIŤ</button>
      </div>
    </section>

    <footer class="nav-bar"><span class="nav-handle"></span></footer>
  </main>
</div>
</body>
</html>
```

FILE: styles.css
```css
:root {
  --accent: #119bf2;
  --corner: 168px;
}

*,
*::before,
*::after {
  box-sizing: border-box;
}

body {
  margin: 0;
  background: #fff;
  color: #000;
  font-family: Roboto, "Liberation Sans", sans-serif;
}

button {
  margin: 0;
  font: inherit;
  color: inherit;
  cursor: pointer;
}

/* Phone body */
.device {
  position: relative;
  display: flex;
  min-height: 100vh;
  padding: 240px 83px 119px 73px;
}

.device-frame {
  position: absolute;
  inset: 0;
  width: 100%;
  height: 100%;
}

.screen {
  position: relative;
  display: flex;
  flex: 1;
  flex-direction: column;
  min-width: 0;
  overflow: hidden;
  border-radius: var(--corner);
  background: #000;
}

/* Status bar */
.status-bar {
  display: flex;
  flex: none;
  align-items: center;
  height: 105px;
  padding: 0 122px 0 34px;
  background: #757575;
  color: #fff;
  font-size: 63px;
}

.clock {
  padding-top: 4px;
}

.react-icon {
  width: 62px;
  height: 56px;
  margin-left: 28px;
}

.status-icons {
  display: flex;
  align-items: center;
  margin-left: auto;
}

.pin-icon {
  width: 40px;
  height: 57px;
}

.wifi-icon {
  width: 66px;
  height: 56px;
  margin-left: 44px;
}

.signal-icon {
  width: 56px;
  height: 56px;
  margin-left: 5px;
}

.battery-icon {
  width: 35px;
  height: 57px;
  margin-left: 32px;
}

/* Map */
.map {
  display: block;
  flex: none;
  width: 100%;
  height: auto;
}

.land { fill: #e8efcf; }
.forest { fill: #cee8bd; }
.wood { fill: #bcd7b5; }
.deep { fill: #a5c9a5; }
.stone { fill: #d5d7bf; }
.pale { fill: #efefe7; }
.sand { fill: #f7eecf; }
.desert { fill: #fff6ef; }
.water { fill: #addbff; }

.border {
  fill: none;
  stroke: #808080;
  stroke-width: 2px;
  stroke-linejoin: round;
  vector-effect: non-scaling-stroke;
}

.dashed {
  stroke-dasharray: 9 7;
}

.western {
  stroke-dasharray: 17 14;
}

.place-names {
  fill: #1a1b1d;
  stroke: rgba(255, 255, 255, 0.7);
  stroke-width: 12px;
  stroke-linejoin: round;
  paint-order: stroke;
  font-size: 54px;
  font-weight: 600;
  text-anchor: middle;
}

/* Bottom sheet */
.sheet {
  position: relative;
  display: flex;
  flex: 1;
  flex-direction: column;
  margin-top: -172px;
  padding: 98px 40px 18px 42px;
  border: 22px solid var(--accent);
  border-top-width: 23px;
  border-bottom: 0;
  border-radius: var(--corner) var(--corner) 0 0;
  background: #fff;
}

.choices {
  display: grid;
  grid-template-rows: 247px 241px;
  grid-template-columns: 1fr 1fr;
  gap: 32px 80px;
  padding: 0 46px 0 38px;
}

.pill {
  padding: 12px 0 0;
  border: 13px solid var(--accent);
  border-radius: 124px;
  background: #fff;
  color: var(--accent);
  font-size: 70px;
}

.pill-active {
  background: var(--accent);
  box-shadow: inset 0 0 0 1px rgba(255, 255, 255, 0.2);
  color: #fff;
}

.routes {
  display: flex;
  flex-direction: column;
  gap: 21px;
  margin: 23px 0 0;
  padding: 0;
  list-style: none;
}

.route {
  display: flex;
  flex-direction: column;
  width: 100%;
  padding: 43px 43px 35px;
  border: 0;
  border-radius: 24px;
  background: #eee;
  font-size: 62px;
  line-height: 84px;
  text-align: left;
}

.route-selected {
  padding: 30px 43px 22px;
  border: 13px solid var(--accent);
}

.actions {
  display: flex;
  gap: 72px;
  margin-top: auto;
  padding: 0 46px 0 38px;
}

.round {
  flex: none;
  width: 247px;
  height: 247px;
  padding: 0;
  border: 13px solid var(--accent);
  border-radius: 50%;
  background: #fff;
  color: var(--accent);
}

.round svg {
  display: block;
  width: 247px;
  height: 247px;
  margin: -13px;
}

.start {
  flex: 1;
  height: 247px;
}

/* Gesture bar */
.nav-bar {
  display: flex;
  flex: none;
  justify-content: center;
  height: 69px;
  padding-top: 33px;
  background: #000;
}

.nav-handle {
  width: 316px;
  height: 10px;
  border-radius: 5px;
  background: #eaeaea;
}
```
